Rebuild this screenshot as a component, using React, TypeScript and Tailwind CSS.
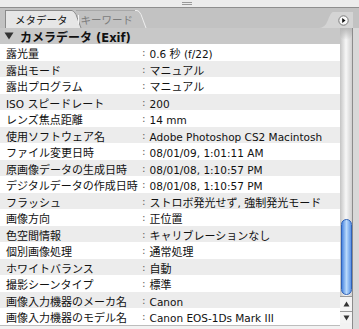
import React from "react";

const LATIN = '"DejaVu Sans", "Noto Sans CJK JP", sans-serif';
const CJK = '"Noto Sans CJK JP", sans-serif';

const rows: [string, string][] = [
  ["露光量", "0.6 秒 (f/22)"],
  ["露出モード", "マニュアル"],
  ["露出プログラム", "マニュアル"],
  ["ISO スピードレート", "200"],
  ["レンズ焦点距離", "14 mm"],
  ["使用ソフトウェア名", "Adobe Photoshop CS2 Macintosh"],
  ["ファイル変更日時", "08/01/09, 1:01:11 AM"],
  ["原画像データの生成日時", "08/01/08, 1:10:57 PM"],
  ["デジタルデータの作成日時", "08/01/08, 1:10:57 PM"],
  ["フラッシュ", "ストロボ発光せず, 強制発光モード"],
  ["画像方向", "正位置"],
  ["色空間情報", "キャリブレーションなし"],
  ["個別画像処理", "通常処理"],
  ["ホワイトバランス", "自動"],
  ["撮影シーンタイプ", "標準"],
  ["画像入力機器のメーカ名", "Canon"],
  ["画像入力機器のモデル名", "Canon EOS-1Ds Mark III"],
];

const CJK_RE = /([\u3000-\u30ff\u4e00-\u9fff\uff00-\uffef]+)/;

// split into japanese / latin runs so each gets its own face and size
function Mixed({ text, big }: { text: string; big?: boolean }) {
  const parts = text.split(CJK_RE).filter(Boolean);
  return (
    <>
      {parts.map((p, i) =>
        CJK_RE.test(p) ? (
          <span key={i} className={big ? "text-[12px]" : "text-[11px]"} style={{ fontFamily: CJK }}>
            {p}
          </span>
        ) : (
          <span key={i} className={big ? "text-[11.5px]" : "text-[10.5px]"} style={{ fontFamily: LATIN }}>
            {p}
          </span>
        )
      )}
    </>
  );
}

function Scrollbar() {
  return (
    <div className="w-[13px] flex flex-col border-r border-[#8c8c8c]">
      <div className="flex-1 relative bg-gradient-to-r from-[#c4c4c4] via-[#f7f7f7] to-[#cfcfcf]">
        <div className="absolute left-0 right-0 top-0 h-[12px] rounded-b-[6px] bg-gradient-to-b from-[#b8b8b8] to-transparent" />
        <div className="absolute left-[1px] right-[0px] top-[191px] h-[76px] rounded-full border border-[#2f62b8] bg-gradient-to-r from-[#4a86e0] via-[#b9d9fa] to-[#5b94e6]" />
      </div>
      <div className="h-[15px] bg-[#f4f4f4] border-t border-[#9a9a9a] flex items-center justify-center">
        <svg width="7" height="6" viewBox="0 0 7 6">
          <path d="M3.5 0.5 L6.5 5.5 L0.5 5.5 Z" fill="#333" />
        </svg>
      </div>
      <div className="h-[12px] bg-[#f4f4f4] border-t border-[#9a9a9a] flex items-center justify-center">
        <svg width="7" height="6" viewBox="0 0 7 6">
          <path d="M0.5 0.5 L6.5 0.5 L3.5 5.5 Z" fill="#333" />
        </svg>
      </div>
    </div>
  );
}

export default function App() {
  return (
    <div className="w-[359px] h-[329px] bg-[#dadada] overflow-hidden flex flex-col">
      {/* top strip with grip */}
      <div className="h-[8px] bg-[#ececec] border-b border-[#8e8e8e] flex items-center justify-center">
        <div className="flex flex-col gap-[1px] ml-[14px]">
          <div className="w-[10px] h-px bg-[#9a9a9a]" />
          <div className="w-[10px] h-px bg-[#9a9a9a]" />
        </div>
      </div>

      {/* tabs */}
      <div className="h-[20px] bg-[#c2c2c2] flex items-end relative pr-[6px]">
        <div className="flex items-end h-[18px] ml-[5px]">
          <div className="h-full bg-[#e6e6e6] border-t border-l border-[#8a8a8a] pl-[9px] pr-[2px] flex items-center text-[10.5px] text-[#111]" style={{ fontFamily: CJK }}>
            メタデータ
          </div>
          <svg width="12" height="18" viewBox="0 0 12 18" className="block">
            <path d="M0 0 L2 0 Q4 0 6 4 L11 18 L0 18 Z" fill="#e6e6e6" />
            <path d="M0 0.5 L2 0.5 Q4 0.5 6 4.5 L11 18" fill="none" stroke="#8a8a8a" />
          </svg>
          <div className="h-full flex items-center pl-[2px] pr-[2px] text-[10.5px] text-[#7c7c7c] border-t border-[#a8a8a8] -ml-[6px] relative" style={{ fontFamily: CJK }}>
            <span className="w-px h-[9px] bg-[#f4f4f4] mr-[2px]" />
            キーワード
          </div>
          <svg width="12" height="18" viewBox="0 0 12 18" className="block">
            <path d="M0 0.5 L2 0.5 Q4 0.5 6 4.5 L11 18" fill="none" stroke="#eeeeee" />
          </svg>
        </div>
        <div className="ml-auto flex items-end h-[18px]">
          <svg width="14" height="18" viewBox="0 0 14 18" className="block">
            <path d="M0 18 Q6 18 9 10 Q12 2 14 2 L14 18 Z" fill="#d4d4d4" />
          </svg>
          <div className="h-[16px] w-[20px] bg-[#d4d4d4] flex items-center justify-center">
            <svg width="11" height="11" viewBox="0 0 11 11">
              <circle cx="5.5" cy="5.5" r="4.7" fill="#f8f8f8" stroke="#7a7a7a" />
              <path d="M4.2 3 L7.5 5.5 L4.2 8 Z" fill="#111" />
            </svg>
          </div>
        </div>
      </div>

      {/* body */}
      <div className="flex flex-1 min-h-0">
        <div className="w-[340px] flex flex-col">
          <div className="h-[16px] bg-[#c8c8c8] flex items-center pl-[4px] gap-[6px] font-bold text-[#111] whitespace-nowrap">
            <svg width="10" height="8" viewBox="0 0 10 8">
              <path d="M0.5 0.5 L9.5 0.5 L5 7.5 Z" fill="#333" />
            </svg>
            <span className="leading-none">
              <Mixed text="カメラデータ (Exif)" big />
            </span>
          </div>
          {rows.map(([label, value], i) => (
            <div
              key={label}
              className={`h-[16.5px] flex items-center pl-[6px] text-[#111] whitespace-nowrap leading-none ${
                i % 2 === 1 ? "bg-[#ececec]" : "bg-white"
              }`}
            >
              <span className="w-[136px] shrink-0">
                <Mixed text={label} />
              </span>
              <span className="text-[10.5px] text-[#666]" style={{ fontFamily: LATIN }}>
                :
              </span>
              <span className="pl-[4px]">
                <Mixed text={value} />
              </span>
            </div>
          ))}
          <div className="flex-1 border-t border-[#bdbdbd] bg-[#f2f2f2]" />
        </div>
        <div className="flex flex-col">
          <div className="flex-1 flex min-h-0">
            <Scrollbar />
          </div>
          <div className="h-[6px] border-r border-[#8c8c8c] bg-[#f2f2f2]" />
        </div>
        <div className="flex-1 bg-[#d8d8d8]" />
      </div>
    </div>
  );
}
